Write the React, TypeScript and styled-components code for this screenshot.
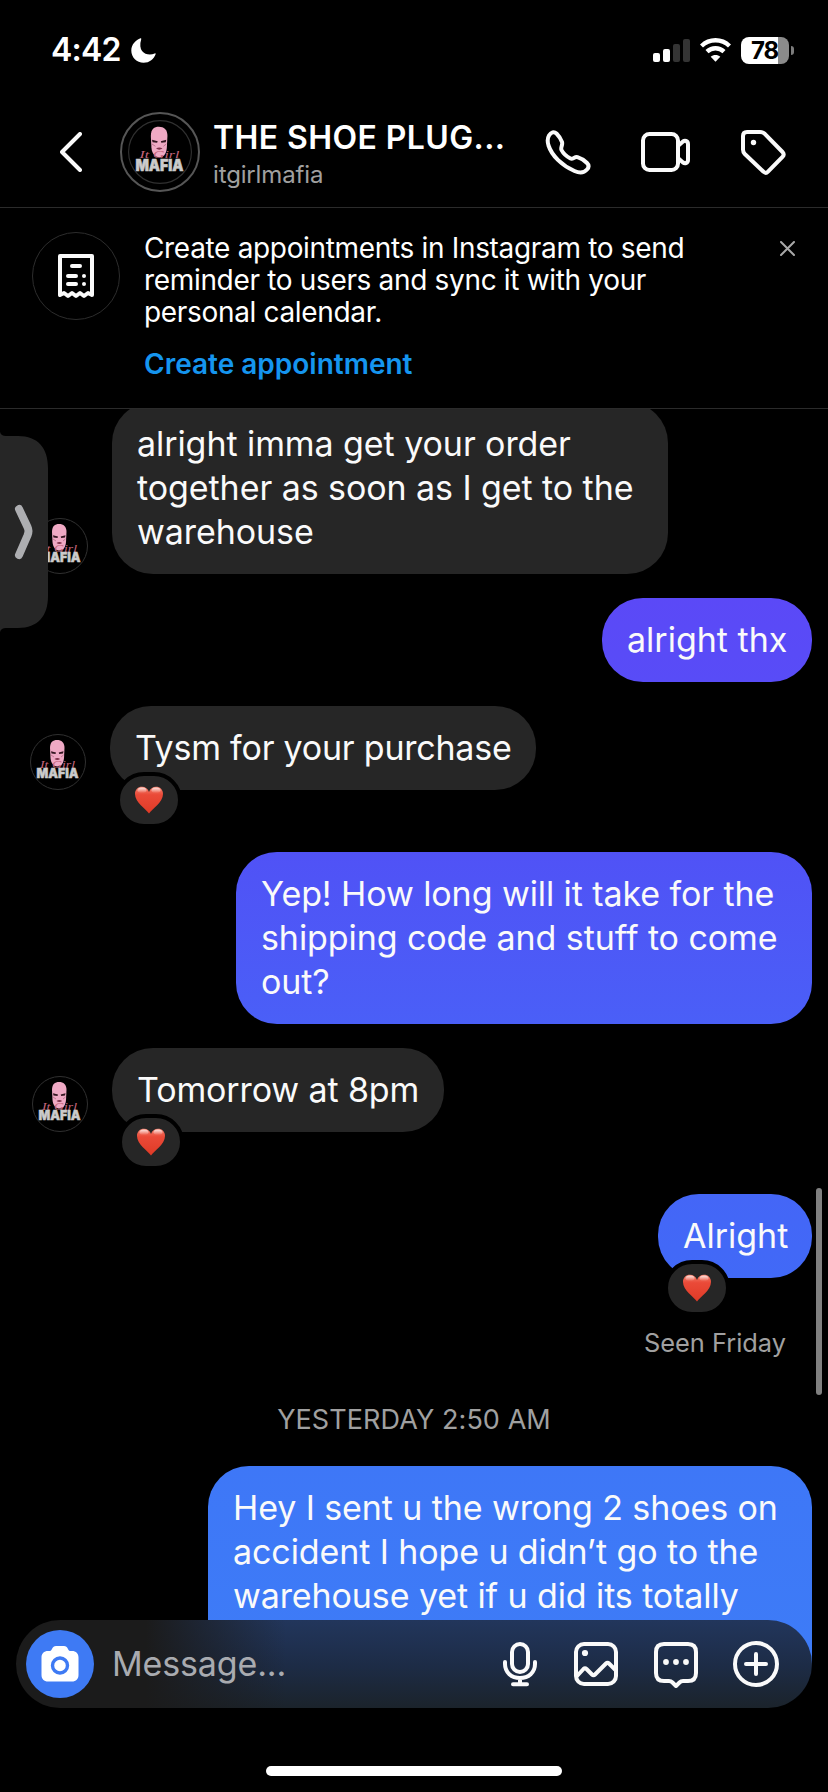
import React from "react";
import styled, { createGlobalStyle } from "styled-components";

const GlobalStyle = createGlobalStyle`
  *, *::before, *::after { box-sizing: border-box; }
  html, body { margin: 0; padding: 0; background: #000; }
  body { font-family: Inter, "Liberation Sans", sans-serif; color: #fff; }
  svg { display: block; flex: none; }
`;

const Screen = styled.main`
  position: relative;
  display: flex;
  flex-direction: column;
  width: 828px;
  height: 1792px;
  overflow: hidden;
  background: #000;
`;

const StatusBar = styled.div`
  display: flex;
  align-items: center;
  justify-content: space-between;
  height: 100px;
  padding: 0 34px 0 51px;
`;

const StatusGroup = styled.div<{ $gap: number }>`
  display: flex;
  align-items: center;
  gap: ${(p) => p.$gap}px;
`;

const Clock = styled.span`
  font-size: 32px;
  line-height: 40px;
  font-weight: 600;
  letter-spacing: -0.75px;
`;

const Battery = styled.div`
  position: relative;
  display: flex;
  align-items: center;
  justify-content: center;
  width: 48px;
  height: 27px;
  margin-right: 5px;
  border-radius: 8px;
  background: linear-gradient(90deg, #fff 37px, #8b8b8b 37px);
  color: #000;
  font-size: 24px;
  line-height: 27px;
  font-weight: 700;
  letter-spacing: -1px;
  padding-right: 1px;
  &::after {
    content: "";
    position: absolute;
    left: 50px;
    top: 9px;
    width: 3px;
    height: 9px;
    border-radius: 0 4px 4px 0;
    background: #7c7c7c;
  }
`;

const Header = styled.header`
  display: flex;
  align-items: center;
  height: 108px;
  padding: 0 42px 4px 60px;
  border-bottom: 1px solid #2b2b2b;
`;

const HeaderAvatar = styled.div`
  display: flex;
  align-items: center;
  justify-content: center;
  width: 80px;
  height: 80px;
  margin-left: 38px;
  border: 2px solid #565656;
  border-radius: 50%;
`;

const Names = styled.div`
  flex: 1;
  margin-left: 13px;
  padding-top: 5px;
  white-space: nowrap;
`;

const Title = styled.h1`
  margin: 0;
  font-size: 32px;
  line-height: 40px;
  font-weight: 600;
  letter-spacing: 0.4px;
`;

const Username = styled.div`
  font-size: 24px;
  line-height: 33px;
  letter-spacing: -0.15px;
  color: #a0a0a0;
`;

const HeaderActions = styled.div`
  display: flex;
  align-items: center;
  gap: 50px;
`;

const Banner = styled.section`
  display: flex;
  align-items: flex-start;
  height: 201px;
  padding: 24px 33px 0 32px;
  border-bottom: 1px solid #2b2b2b;
`;

const BannerIcon = styled.div`
  display: flex;
  align-items: center;
  justify-content: center;
  width: 88px;
  height: 88px;
  border: 1px solid #2d2d2d;
  border-radius: 50%;
`;

const BannerBody = styled.div`
  flex: 1;
  margin-left: 24px;
  white-space: nowrap;
`;

const BannerText = styled.p`
  margin: 0 0 20px;
  font-size: 28px;
  line-height: 32px;
  letter-spacing: -0.33px;
`;

const BannerLink = styled.a`
  display: block;
  font-size: 28px;
  line-height: 32px;
  font-weight: 600;
  color: #1595ef;
`;

const BannerClose = styled.div`
  padding-top: 9px;
`;

const Thread = styled.section`
  flex: none;
  display: flex;
  flex-direction: column;
  height: 1255px;
  overflow: hidden;
`;

const Row = styled.div<{ $out?: boolean; $top: number; $left?: number }>`
  flex: none;
  display: flex;
  align-items: flex-end;
  justify-content: ${(p) => (p.$out ? "flex-end" : "flex-start")};
  gap: 24px;
  margin-top: ${(p) => p.$top}px;
  padding: 0 16px 0 ${(p) => p.$left ?? 32}px;
`;

const Bubble = styled.div<{ $bg?: string; $width: number; $spacing?: number; $lines?: number }>`
  position: relative;
  width: ${(p) => p.$width}px;
  height: ${(p) => (p.$lines ?? 1) * 44 + 40}px;
  padding: 20px 0 20px 25px;
  border-radius: 41px;
  background: ${(p) => p.$bg ?? "#262626"};
  font-size: 34px;
  line-height: 44px;
  letter-spacing: ${(p) => p.$spacing ?? 0}px;
  white-space: nowrap;
  color: #fafafa;
`;

const Reaction = styled.div`
  position: absolute;
  left: 6px;
  top: 66px;
  display: flex;
  align-items: center;
  justify-content: center;
  width: 66px;
  height: 56px;
  border: 4px solid #000;
  border-radius: 28px;
  background: #262626;
`;

const Seen = styled.div`
  flex: none;
  margin-top: 48px;
  padding-right: 42px;
  text-align: right;
  font-size: 25.4px;
  line-height: 34px;
  color: #a0a0a0;
`;

const DateLabel = styled.div`
  flex: none;
  margin-top: 43px;
  text-align: center;
  font-size: 27px;
  line-height: 34px;
  letter-spacing: 0.08px;
  color: #a0a0a0;
`;

const Composer = styled.footer`
  position: relative;
  flex: none;
  display: flex;
  align-items: center;
  height: 88px;
  margin: -44px 16px 0;
  padding: 0 33px 0 10px;
  border-radius: 44px;
  background:
    linear-gradient(90deg, #1b1b1b 0, #1b1b1b 130px, rgba(27, 27, 27, 0) 270px),
    linear-gradient(180deg, #22365c 0%, #1d2c47 50%, #1b232b 100%);
`;

const Camera = styled.div`
  display: flex;
  align-items: center;
  justify-content: center;
  width: 68px;
  height: 68px;
  border-radius: 50%;
  background: #3e7af4;
`;

const Placeholder = styled.span`
  flex: 1;
  margin-left: 18px;
  font-size: 34px;
  line-height: 44px;
  letter-spacing: -0.15px;
  color: #a9abb0;
`;

const ComposerIcons = styled.div`
  display: flex;
  align-items: center;
  gap: 34px;
`;

const HomeIndicator = styled.div`
  flex: none;
  width: 296px;
  height: 10px;
  margin: 58px auto 0;
  border-radius: 5px;
  background: #fff;
`;

const SideTab = styled.div`
  position: absolute;
  left: 0;
  top: 432px;
`;

const ScrollThumb = styled.div`
  position: absolute;
  right: 6px;
  top: 1188px;
  width: 6px;
  height: 207px;
  border-radius: 3px;
  background: #808080;
`;

const Logo = ({ size }: { size: number }) => (
  <svg width={size} height={size} viewBox="0 0 56 56">
    <circle cx="28" cy="28" r="27.5" fill="#000" stroke="#303030" />
    <path d="M20 14 C20 8 23 6 27 6 C31.500 6 34.500 8.500 34.500 14 L34 24 C33.500 30 31 32.500 27.500 32.500 C24 32.500 21 30 20.500 24 Z" fill="#efa9c4" />
    <path d="M21 17.300 L26 18.500 L25.500 20 L21.500 19.500 Z M33.500 17.300 L28.700 18.500 L29.200 20 L33 19.500 Z" fill="#32141f" />
    <path d="M24.500 25 Q27.300 23 30.200 25 Q27.300 27 24.500 25 Z" fill="#7c3048" />
    <path d="M21 21 L24 23 M33.500 21 L31 23" stroke="#b86d89" strokeWidth="0.800" />
    <text x="10" y="33.500" fontFamily="Liberation Serif, serif" fontStyle="italic" fontSize="9.500" fill="#c4657c" textLength="35" lengthAdjust="spacingAndGlyphs">It Girl</text>
    <text x="6.500" y="44.300" fontFamily="Inter, sans-serif" fontWeight="900" fontSize="13.500" fill="#cbcbcb" stroke="#cbcbcb" strokeWidth="0.500" textLength="42" lengthAdjust="spacingAndGlyphs">MAFIA</text>
  </svg>
);

const Heart = () => (
  <svg width="28" height="28" viewBox="0 0 28 28">
    <defs>
      <linearGradient id="heartFill" x1="0" y1="0" x2="0" y2="1">
        <stop offset="0" stopColor="#f4826f" />
        <stop offset="0.300" stopColor="#ea4a38" />
        <stop offset="1" stopColor="#e03a26" />
      </linearGradient>
      <linearGradient id="heartShine" x1="0" y1="0" x2="0" y2="1">
        <stop offset="0" stopColor="#fff" stopOpacity="0.800" />
        <stop offset="1" stopColor="#fff" stopOpacity="0" />
      </linearGradient>
    </defs>
    <path d="M14 27.500 C11 23 0 16.500 0 8 C0 3.500 3 0.800 7 0.800 C10.300 0.800 13 2.800 14 6 C15 2.800 17.700 0.800 21 0.800 C25 0.800 28 3.500 28 8 C28 16.500 17 23 14 27.500 Z" fill="url(#heartFill)" />
    <ellipse cx="7" cy="4.200" rx="4.500" ry="2.800" fill="url(#heartShine)" />
    <ellipse cx="21" cy="4.200" rx="4.500" ry="2.800" fill="url(#heartShine)" />
  </svg>
);

const line = { fill: "none", stroke: "#fafafa", strokeWidth: 4, strokeLinecap: "round", strokeLinejoin: "round" } as const;

export default function App() {
  return (
    <Screen>
      <GlobalStyle />
      <StatusBar>
        <StatusGroup $gap={10}>
          <Clock>4:42</Clock>
          <svg width="25" height="25" viewBox="0 0 25 25">
            <path d="M9.500 0.200 C5 1.700 0.300 6.300 0.300 12.500 C0.300 19.500 5.800 24.800 12.600 24.800 C18.500 24.800 23 21 24.700 16 C24.800 15.400 24.300 15.100 23.700 15.400 C17.300 18.300 6 15.500 10.200 1.200 C10.400 0.500 10 0 9.500 0.200 Z" fill="#fff" />
          </svg>
        </StatusGroup>
        <StatusGroup $gap={10}>
          <svg width="37" height="25" viewBox="0 0 37 25">
            <rect x="0" y="15" width="7" height="9" rx="2" fill="#fff" />
            <rect x="10" y="11" width="7" height="13" rx="2" fill="#fff" />
            <rect x="20" y="6" width="7" height="18" rx="2" fill="#343434" />
            <rect x="30" y="1" width="7" height="23" rx="2" fill="#343434" />
          </svg>
          <svg width="31" height="25" viewBox="0 0 31 25">
            <path d="M1.500 8 C9.500 0.400 21.500 0.400 29.500 8" fill="none" stroke="#fff" strokeWidth="4.400" />
            <path d="M7 13.700 C12 9 19 9 24 13.700" fill="none" stroke="#fff" strokeWidth="4.400" />
            <path d="M10.700 18.800 C13.300 16.300 17.700 16.300 20.300 18.800 L15.500 23.800 Z" fill="#fff" />
          </svg>
          <Battery>78</Battery>
        </StatusGroup>
      </StatusBar>

      <Header>
        <svg width="22" height="40" viewBox="0 0 22 40">
          <path d="M20 2 L2 20 L20 38" {...line} />
        </svg>
        <HeaderAvatar>
          <Logo size={64} />
        </HeaderAvatar>
        <Names>
          <Title>THE SHOE PLUG...</Title>
          <Username>itgirlmafia</Username>
        </Names>
        <HeaderActions>
          <svg width="46" height="46" viewBox="0 0 46 46">
            <path d="M4 6.500 C6 3 9 2.200 11.500 4.500 C14 7 15.800 10 17 13 C18 16 15.300 18.500 16.500 21 C18.500 25 21.500 27.500 25.500 29.500 C28 30.500 29.500 27.500 32.500 28.200 C36 29.300 39.500 31.500 42 34 C44 36 43.800 38.500 42 40.500 C38.500 44.500 34 44 29.500 42 C17 36.500 7 27 3.500 16.500 C2.300 12.500 2.200 9.500 4 6.500 Z" {...line} />
          </svg>
          <svg width="49" height="46" viewBox="0 0 49 46">
            <rect x="2" y="5" width="35" height="36" rx="6.500" {...line} />
            <path d="M37.500 16.500 L42 12.500 Q43.500 11.500 45 12 Q47 12.700 47 15 V31 Q47 33.300 45 34 Q43.500 34.500 42 33.500 L37.500 29.500" {...line} />
          </svg>
          <svg width="46" height="46" viewBox="0 0 46 46">
            <path d="M7 3 H20 C22 3 23.300 3.500 24.800 4.800 L42.500 23 C44.200 24.800 44.200 26 42.500 27.800 L28 42.700 C26.500 44.200 25 44.200 23.500 42.700 L4.800 25 C3.600 23.800 3 22.500 3 20.500 V7 C3 4.500 4.500 3 7 3 Z" {...line} />
            <circle cx="13.500" cy="13.500" r="2.700" fill="#fafafa" />
          </svg>
        </HeaderActions>
      </Header>

      <Banner>
        <BannerIcon>
          <svg width="36" height="45" viewBox="0 0 36 45">
            <path d="M2 41 V2 H34 V41 L30 39 L26 42 L22 39 L18 42 L14 39 L10 42 L6 39 Z" {...line} />
            <path d="M14 12 H22 M10 22 H18 M10 30 H18" {...line} />
            <circle cx="26" cy="22" r="2" fill="#fafafa" />
            <circle cx="26" cy="30" r="2" fill="#fafafa" />
          </svg>
        </BannerIcon>
        <BannerBody>
          <BannerText>
            Create appointments in Instagram to send
            <br />
            reminder to users and sync it with your
            <br />
            personal calendar.
          </BannerText>
          <BannerLink>Create appointment</BannerLink>
        </BannerBody>
        <BannerClose>
          <svg width="15" height="15" viewBox="0 0 15 15">
            <path d="M1 1 L14 14 M14 1 L1 14" stroke="#a8a8a8" strokeWidth="2" strokeLinecap="round" />
          </svg>
        </BannerClose>
      </Banner>

      <Thread>
        <Row $top={-7}>
          <Logo size={56} />
          <Bubble $width={556} $lines={3} $spacing={-0.07}>
            alright imma get your order
            <br />
            together as soon as I get to the
            <br />
            warehouse
          </Bubble>
        </Row>
        <Row $out $top={24}>
          <Bubble $width={210} $bg="linear-gradient(#5b49f7, #584cf7)">alright thx</Bubble>
        </Row>
        <Row $top={24} $left={30}>
          <Logo size={56} />
          <Bubble $width={426} $spacing={-0.22}>
            Tysm for your purchase
            <Reaction><Heart /></Reaction>
          </Bubble>
        </Row>
        <Row $out $top={62}>
          <Bubble $width={576} $lines={3} $spacing={-0.08} $bg="linear-gradient(#5052f6, #4a5ff7)">
            Yep! How long will it take for the
            <br />
            shipping code and stuff to come
            <br />
            out?
          </Bubble>
        </Row>
        <Row $top={24}>
          <Logo size={56} />
          <Bubble $width={332} $spacing={-0.12}>
            Tomorrow at 8pm
            <Reaction><Heart /></Reaction>
          </Bubble>
        </Row>
        <Row $out $top={62}>
          <Bubble $width={154} $bg="linear-gradient(#4466f7, #4169f7)">
            Alright
            <Reaction><Heart /></Reaction>
          </Bubble>
        </Row>
        <Seen>Seen Friday</Seen>
        <DateLabel>YESTERDAY 2:50 AM</DateLabel>
        <Row $out $top={29}>
          <Bubble $width={604} $lines={5} $spacing={-0.1} $bg="linear-gradient(#3e77f7, #3d7df7)">
            Hey I sent u the wrong 2 shoes on
            <br />
            accident I hope u didn’t go to the
            <br />
            warehouse yet if u did its totally
          </Bubble>
        </Row>
      </Thread>

      <Composer>
        <Camera>
          <svg width="38" height="36" viewBox="0 0 38 36">
            <path d="M7 5 H9 C11 5 11 0 15 0 H23 C27 0 27 5 29 5 H31 C35 5 37.500 7.500 37.500 11.500 V29 C37.500 33 35 35.500 31 35.500 H7 C3 35.500 0.500 33 0.500 29 V11.500 C0.500 7.500 3 5 7 5 Z" fill="#fff" />
            <circle cx="19" cy="19.500" r="7.500" fill="none" stroke="#3e7af4" strokeWidth="3.400" />
          </svg>
        </Camera>
        <Placeholder>Message...</Placeholder>
        <ComposerIcons>
          <svg width="38" height="48" viewBox="0 0 38 48">
            <rect x="11" y="4" width="16" height="28" rx="8" {...line} />
            <path d="M4 22 V24 C4 32.500 10.500 38 19 38 C27.500 38 34 32.500 34 24 V22 M19 38 V44 M12 44.200 H26" {...line} />
          </svg>
          <svg width="46" height="48" viewBox="0 0 46 48">
            <rect x="3" y="4" width="40" height="40" rx="8" {...line} />
            <circle cx="12" cy="13" r="3.100" fill="#fafafa" />
            <path d="M4 36 L10.500 29 Q12 27.500 13.500 29 L19 34.500 Q20.500 36 22 34.500 L33 23.500 Q34.500 22 36 23.500 L42 29.500" {...line} />
          </svg>
          <svg width="46" height="48" viewBox="0 0 46 48">
            <path d="M11 4 H35 C40.500 4 43 7 43 12 V33 C43 38.500 40 41 35 41 H30 C28.500 41 27.500 41.500 26.500 42.500 L23 46 L19.500 42.500 C18.500 41.500 17.500 41 16 41 H11 C5.500 41 3 38.500 3 33 V12 C3 7 5.500 4 11 4 Z" {...line} />
            <circle cx="13" cy="22" r="2.900" fill="#fafafa" />
            <circle cx="23" cy="22" r="2.900" fill="#fafafa" />
            <circle cx="33" cy="22" r="2.900" fill="#fafafa" />
          </svg>
          <svg width="46" height="48" viewBox="0 0 46 48">
            <circle cx="23" cy="24" r="21" {...line} />
            <path d="M23 14 V34 M13 24 H33" {...line} />
          </svg>
        </ComposerIcons>
      </Composer>
      <HomeIndicator />

      <SideTab>
        <svg width="48" height="200" viewBox="0 0 48 200">
          <path d="M0 0 Q1 4 6 4 H18 C38 4 48 16 48 36 V164 C48 184 38 196 18 196 H6 Q1 196 0 200 Z" fill="#262626" />
          <path d="M19 77 L27.500 95 Q28.500 97.500 28.500 99 Q28.500 101 27.500 103.500 L19 123" fill="none" stroke="#adaeb1" strokeWidth="8" strokeLinecap="round" strokeLinejoin="round" />
        </svg>
      </SideTab>
      <ScrollThumb />
    </Screen>
  );
}
